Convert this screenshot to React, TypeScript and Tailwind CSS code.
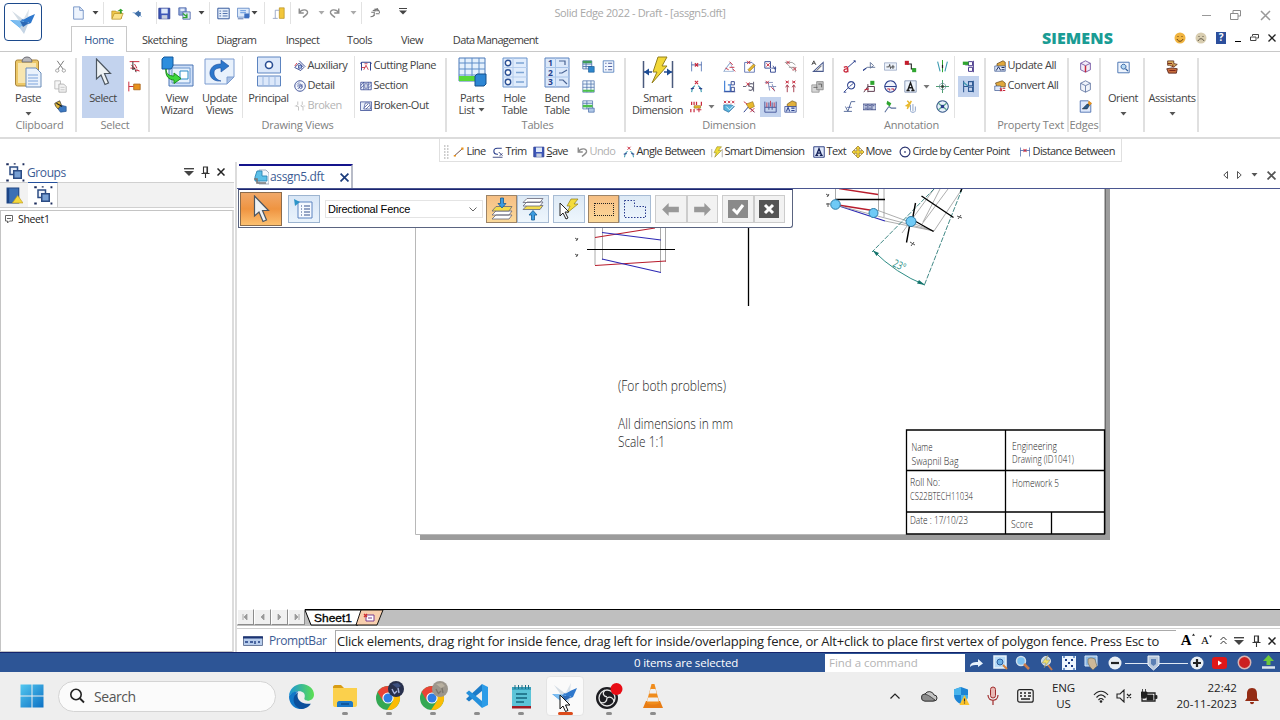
import React from "react";

type Shape = [string, string, string?, number?];

const N = "#2b3f8c";
const R = "#c8283c";
const K = "#1c1c1c";
const B = "#4a86d8";
const Y = "#e8b82c";
const G = "#2fa52f";
const O = "#e8921c";
const X = "#9a9a9a";
const T = "#3a9ab0";

/* 16x16 glyphs: [path, fill, stroke, stroke width] */
const glyphs: Record<string, Shape[]> = {
  file: [["M3 1h7l4 4v10H3z", "#eef4fd", "#6f8fc4"], ["M10 1v4h4", "none", "#6f8fc4"]],
  open: [["M1 5h5l1 1h6v8H1z", "#f0c84a", "#b08a1c", 0.8], ["M1 15l3-7h11l-3 7z", "#fbe28a", "#b08a1c", 0.8], ["M8 5l4-3 3 3-2 0v3h-2v-3", G, "none"]],
  back: [["M4 8l6-4v2h2v5h-2v2z", "#3f6fa8", "none"], ["M2 7h3M11 10l2 2", "none", "#8ab0dc", 1.2]],
  save: [["M1 1.5h13.5v13H1z", "#3c56b8", "#26378c"], ["M4 2h8v6H4z", "#dde8fa", "none"], ["M4.500 10h7v4.500h-7z", "#c6cede", "none"]],
  saveAll: [["M1 1h9v9H1z", "#8ea6d8", "#4a62a8"], ["M6 6h9v9H6z", "#dce6f8", "#4a62a8"], ["M6 8l5 4M11 8v5H6", "none", G, 1.500], ["M3 2h5v3H3z", "#e4ecfa", "none"]],
  form: [["M1 1.500h14v13H1z", "#e4eefb", "#34599c", 1.2], ["M3 5h2M3 8h2M3 11h2M7 5h6M7 8h6M7 11h6", "none", "#34599c"]],
  sheetSave: [["M0.500 1.500h14.500v11H.5z", "#dce9fa", "#5a82c4"], ["M4 4.500h7M4 7h7", "none", B], ["M9 8h6v6H9z", "#3c6fc0", "none"], ["M1 14.500h7", "none", "#34599c"]],
  mat: [["M9 1h6v13H9z", "#f2c63a", "#b08a1c", 0.8], ["M1 14h6M4 14V4h5", "none", "#8c9cbc"]],
  undo: [["M3 2v6h6M3 8c3-6 12-5 11 0-1 3-4 4-6 6", "none", "#8c8c8c", 1.900]],
  redo: [["M13 2v6H7M13 8C10 2 1 3 2 8c1 3 4 4 6 6", "none", "#8c8c8c", 1.900]],
  touch: [["M2 13c4 0 5-2 5-4M3 7l4 0v5M9 3c4 0 5 2 5 5M8 6l0-4M8 5h5M5 5l7-3M9 9l5 0", "none", "#777", 1.400]],
  cut: [["M4 1l7 10M12 1L5 11", "none", "#777", 1.200], ["M4 11a2 2 0 1 0 .1 0M12 11a2 2 0 1 0 .1 0", "none", "#888"]],
  copy: [["M1 1h7v10H1z", "#f6f6f6", "#b4b4b4"], ["M6 5h6l3 3v7H6z", "#f2f2f2", "#aaa"], ["M8 9h5M8 12h5", "none", "#c0c0c0"]],
  brush: [["M7 6l8 2v6l-7 1-3-4z", "#3c78c0", "#24508c", 0.8], ["M1 4l6-3 2 5-4 5C3 9 1 7 1 4z", "#e0b83c", "#333", 0.900], ["M3 4l7 4", "none", K, 1.300]],
  lasso: [["M2 2h12M4 6l4 4M8 5l3 5M3 10h6", "none", R, 1.200], ["M6 2v10l2-2 2 5", "none", K, 1.100], ["M9 13h5M10 11l4 3", "none", R]],
  pinbox: [["M1 2v12M1 8h6", "none", R, 1.200], ["M7 5h8v7H7z", O, "#a8641c"]],
  aux: [["M1 10l6-6 6 6-4 4zM7 1l8 8", "none", N, 1.200], ["M6 7h4v4H6z", "#a8c4ee", N], ["M1 8l3-4", "none", R, 1.200]],
  detail: [["M8 1a7 7 0 1 0 .1 0", "#f4f7fd", N, 1.200], ["M5 9c0-4 5-5 6-1s-4 5-4 1 4-2 3 1M4 6l3-3M5 12l6-6", "none", N, 0.900]],
  broken: [["M5 2v4l-2 2 3 1v5M11 2v4l-2 2 3 1v5", "none", "#b8b8b8", 1.100], ["M1 8h3M12 8h3", "none", "#c4c4c4"]],
  cutplane: [["M2 14V3h12v11M2 3L0 5M14 3l2 2", "none", N, 1.300], ["M5 13l3-6 3 6M2 10h5M6 5h4", "none", R, 1.100]],
  section: [["M1 3h14v10H1z", "#e8eefb", N, 1], ["M5 3v10M11 3v10", "none", N, 0.9], ["M6.500 5h3v6h-3z", "#fff", N, 0.8], ["M1 7l4-4M1 11l4-4M11 7l4-4M11 11l4-4", "none", N, 0.8]],
  brokenout: [["M.500 2.500h15v11.500H.5z", "#e8eefb", N, 1], ["M5 12l2-8 6 0 1 8z", "#fff", N, 0.9], ["M6 10l5-5M8 12l5-5", "none", N, 0.9]],
  tblA: [["M1 1h11v10H1z", "#e8f2fd", "#4a6fa8"], ["M1 5h11M1 8h11M5 1v10", "none", "#4a6fa8"], ["M1 1h11v3H1z", "#3f9c5c", "none"], ["M8 8h7v7H8z", "#2d86cc", "#1c5a94", 0.8]],
  tblB: [["M1 1h14v14H1z", "#eef6fd", "#4a6fa8", 0.9], ["M1 5h14M1 9h14M6 1v14M11 1v14", "none", "#4a6fa8", 0.900], ["M1 12h14v2.500H1z", "#4cc04c", "none"]],
  tblC: [["M1 1h12v10H1z", "#e8f2fd", "#4a6fa8", 0.9], ["M1 4h12M6 1v10", "none", "#4a6fa8"], ["M1 6h12v3H1z", "#4cc04c", "none"], ["M8 10h7v5H8z", "#b0c8e8", "#3c62a0", 0.8]],
  list: [["M1.500 1h13v14h-13z", "#f2f7fe", "#4a78b8"], ["M4 4h1.500M4 8h1.500M4 12h1.500M7.500 4h5M7.500 8h5M7.500 12h5", "none", N]],
  distBetween: [["M2 2v12M14 2v12", "none", "#5a7ab8", 1.100], ["M2 6h12", "none", N, 0.9], ["M6 4l4 4M10 4L6 8", "none", R, 1.400]],
  angBetween: [["M2 15l1-5 3-3M14 15l-1-5-3-3", "none", T, 1.400], ["M1 11l4-1M15 11l-4-1", "none", N, 1.700], ["M6 1l4 4M10 1L6 5", "none", R, 1.300]],
  coord: [["M2 2v4M5 2v4M8 2v4M1 11v4M5 11v4M14 2v5", "none", R, 1.500], ["M5 7h8v3H5z", Y, "#8c6c1c", 0.7], ["M8 12h6M11 10v5", "none", R, 1.200]],
  symDim: [["M1 14h12L9 3zM1 14L9 3", "none", "#8aa4cc", 0.9], ["M8 2l4 4M8 9l6 0M3 10l4 2M12 11l3 3", "none", R, 1.100]],
  chamf: [["M2 3h9l3 3v9H2V3", "none", "#5a6fb0", 1.1], ["M5 1l4 4M9 1L5 5", "none", R, 1.200], ["M6 12l7-7 2 2-7 7z", Y, "#8c6c1c", 0.700]],
  ordin: [["M1 2v8h7V2zM8 11v4h6V8", "none", N, 1.100], ["M3 4l4 4M7 4L3 8", "none", R, 1.200], ["M11 7l3 5M9 10h6", "none", N]],
  balloonX: [["M1 3h9l4 3M2 3l10 10M6 9h8v6", "none", X, 1.1], ["M3 1l4 4M7 1L3 5M11 9l4 4M15 9l-4 4", "none", R, 1.100]],
  wall: [["M2 1v13M6 6h3v8H2", "none", B, 1.500], ["M10 2h4v4h-4zM10 9h4v5h-4z", "none", N, 1.1], ["M1 14.500h14", "none", N]],
  dimS: [["M0 8h4M13 2v12M7 12c5 3 7-4 2-4s-2-5 4-3", "none", "#6a6a7c", 1.300], ["M4 3l4 4M8 3L4 7", "none", R, 1.100]],
  dimT: [["M1 3h10M5 3l2 10M6 8h9M10 5l3 9", "none", "#8894bc", 1.200], ["M2 1l4 4M6 1L2 5M9 9l4 4", "none", R, 1.100]],
  arrows2: [["M4 6v9M12 6v9M2 9l2-3 2 3M10 9l2-3 2 3", "none", "#a84050", 1.200], ["M2 1l4 3M6 1L2 4M10 1l4 3M14 1l-4 3", "none", R, 1.200]],
  checkX: [["M1 1l3 3M4 1L1 4M6 1l3 3M9 1L6 4M11 1l3 3M14 1l-3 3", "none", R, 1.100], ["M1 6h9l4 2-7 7-6-3z", "#5ab4dc", "#2c6ca0", 0.9], ["M4 8l4 4 7-7", "none", "#dff2fc", 1.200]],
  dimY: [["M1 15l6-7M7 9l7 6", "none", N, 1.200], ["M4 5l8-3 2 6-6 3z", Y, "#94701c", 0.8], ["M9 10l5 5M14 10l-5 5M1 2l4 3", "none", R, 1.100]],
  dimGrid: [["M1 2v13h14V2M1 9h14M6 3v9M10 3v9", "none", "#4a5a9c", 1.200], ["M3.500 3v6M8 1v7M12.500 3v6", "none", R, 1]],
  propA: [["M4 5l6-4 5 2v5H4z", "#e0b03c", "#6a501c", 0.8], ["M1 8h14v7H1z", "#dce8fb", N, 0.9], ["M3 14l2-5 2 5M9 10h4M9 13h4", "none", N, 1.300]],
  atri: [["M3 14h12V3z", "none", "#4a5a8c", 1.300], ["M1 6l2.500-5L6 6M2 4h3M7 13l6-6", "none", "#333", 1]],
  grayBox: [["M1 6h9v9H1z", "#d8d8d8", "#888", 0.9], ["M7 2h8v10H7z", "#c4c4c4", "#7c7c7c", 0.9], ["M3 9h5M9 5h4v4", "none", "#555"]],
  leader: [["M6 9l9-8M13 1h2v2", "none", N, 1.200], ["M1 9c5-2 5 0 5 6M6 11c-6-1-6 4-2 4l2-2", "none", R, 1.600]],
  callout: [["M10 2a4.500 4.500 0 1 0 .1 0", "none", N, 1.300], ["M6 10l-5 5M8 8l5-4M1 15h3", "none", N, 1.100]],
  surf: [["M3 8l3 6 4-12h5M1 14h10", "none", "#5a6f9c", 1.200], ["M5 9h6", "none", N, 0.800]],
  weld: [["M0 13l5-4 10 0M9 3v7M9 3l4 4-4 3", "none", "#6a7a9c", 1.200], ["M0 13l4-3", "none", N, 1.400]],
  edgeC: [["M1 15l5-7M6 5v10M6 8h8v6H6", "none", "#5a3a4c", 1.200], ["M9 1h5v5H9z", G, "none"], ["M2 12l5-1", "none", R, 1.500]],
  frame: [["M0 5h16v7H0z", "#c8d0e8", "#34407c", 1], ["M2 7h3M7 7h3M12 7h2M2 10h3M7 10h3M6 5v7M11 5v7", "none", "#34407c", 1]],
  frameF: [["M.500 3.500h15v9H.5z", "#eef3fb", "#8c9cbc", 0.9], ["M3 8.500h3l1-3 1 5 1-2h4M11 6v5", "none", "#333", 1]],
  datum: [["M8 1a7 7 0 1 0 .1 0", "#eef2fb", N, 1.300], ["M1 8h14", "none", N, 1.2], ["M4 11h3v2M9 11h3v2", "none", R, 1.200]],
  node: [["M6 8l3 2h6M6 8l-5 7", "none", "#5a6f9c", 1.300], ["M4 1l5 3-2 4-4-3z", G, "none"]],
  conn: [["M4 5h5v6h5", "none", K, 1.300], ["M1 1h5v5H1z", "#c41c2c", "none"], ["M10 10h5v5h-5z", G, "none"]],
  textA: [["M1 1h14v14H1z", "#edf3fc", "#7a8cac"], ["M3 13h4M9 13h4M4.500 13L8 3.500l3.500 9.500M6 9.500h4", "none", K, 1.700]],
  textF: [["M1 1h14v14H1z", "#dfe8fa", "#26367c", 1.200], ["M3 12.500h4M9 12.500h4M4.500 12.500L8 3.500l3.500 9M6 9.500h4", "none", "#101c54", 1.800]],
  lightY: [["M4 1l3 3-4 3 4 1M9 1L4 11", "none", Y, 1.800], ["M8 6v7c0 3 6 3 6 0V8M11 5v9", "none", "#8ca4c8", 1.200]],
  centerL: [["M2 2l3 12M14 2l-3 12", "none", T, 1.300], ["M8 0v15", "none", G, 1.300], ["M8 6v4", "none", K, 1.500]],
  centerM: [["M8 0v16M0 8h16", "none", "#4a9c6c", 1.200], ["M8 4a4 4 0 1 0 .1 0", "none", "#6a8a9c", 0.900], ["M6.500 6.500h3v3h-3z", "#333", "none"]],
  bolt: [["M8 1a7 7 0 1 0 .1 0", "#e8f2fb", "#3c5c8c", 1.300], ["M3 4l10 8M13 4L3 12", "none", "#5aa88c", 1.600], ["M6 6h4v4H6z", N, "none"]],
  relG: [["M8 2h5v5H8zM8 9h5v5H8zM14 1v14M4 6h4", "none", "#4a3a8c", 1.200], ["M1 2h7v4H1z", G, "none"]],
  relB: [["M2 1v14M8 2h5v5H8zM8 9h5v5H8zM14 1v14M2 8h6", "none", "#2f5a94", 1.300], ["M2 3l5 4", "none", T, 1.400]],
  updProp: [["M4 5l8-4 3 2v6H4z", "#e0a83c", "#5a401c", 0.9], ["M1 8h14v7H1z", "#dfe9fb", "#34508c", 0.9], ["M3 14l3-5 3 5M10 10h4M10 13h4", "none", "#1c2c5c", 1.300]],
  convProp: [["M2 4l9-3 4 3v5H4z", "#e0a83c", "#5a401c", 0.9], ["M1 8h8v6H1z", "#dfe9fb", "#34508c", 0.9], ["M8 11l3 4M11 11l-3 4M12 11h3M12 14h3", "none", R, 1.400]],
  cubeR: [["M8 1l6 3v8l-6 3-6-3V4z", "#f2ecf8", "#6a4a9c", 1], ["M2 4l6 3 6-3", "none", "#6a4a9c"], ["M8 7v8", "none", R, 1.800]],
  cube: [["M8 1l6 3v8l-6 3-6-3V4z", "#f0f3fa", "#5a6f9c", 1], ["M2 4l6 3 6-3M8 7v8", "none", "#5a6f9c"]],
  edgePaint: [["M1.500 1h10l3 3v11h-13z", "#dfe9fb", "#3c62a8", 1], ["M4 11l6-6 4 0-4 6z", "#2c5c8c", "#1c1c1c", 0.6], ["M12 1l4 3-3 3-2-3z", O, "none"]],
  orient: [["M1 1.500h14v13H1z", "#eef4fd", "#4f78b4", 1.200], ["M8 4a3 3 0 1 0 .1 0", "#b8daf4", "#2c5c9c", 1.200], ["M10.500 9.500l3 3", "none", "#2c5c9c", 1.500]],
  assist: [["M3 1h7v3l4 1-4 3-5-2H3z", "#d8ac5c", "#5c2c1c", 0.9], ["M2 10l6-1 6 1-1 5H4z", "#c86c3c", "#4c1c14", 0.9], ["M3 4h5M5 12h7M9 5v3", "none", "#7c2418", 1.100]],
  line: [["M2 13L12 4", "none", "#5a3a3a", 1.200], ["M11 2h3v3h-3zM1 12h3v2H1z", O, "none"]],
  trim: [["M13 3H7c-6 0-6 8 0 8h1", "none", N, 1.500], ["M9 8l5 5M14 10l-4 3M1 15h13", "none", "#34407c", 1.200]],
  smart: [["M1 4v11M15 4v11", "none", X], ["M8 1h6l-4 5h4l-9 9 2-6H4z", "#eedc38", "#8a7a1c", 0.7]],
  move: [["M8 0l3.500 3.500H9.500v3h3V4.500L16 8l-3.500 3.500V9.500h-3v3h2L8 16l-3.500-3.500h2v-3h-3v2L0 8l3.500-3.500v2h3v-3h-2z", "#f2d43a", "#8c6c1c", 0.9]],
  circle: [["M8 1.500a6.500 6.500 0 1 0 .1 0", "none", "#2b3470", 1.500], ["M7 7h2v2H7z", "#2b3470", "none"]],
  group: [["M4 4h6v6H4z", "#eef3fb", "#2c4c84", 1.200], ["M7 7h6v6H7z", "#78a0d4", "#2c4c84", 1.200], ["M1 1h2v1.500H1zM7 1h1.500v1H7zM14 1h1.500v1.500H14zM1 14h2v1.500H1zM14 14h1.500v1.500H14z", "#1c2c5c", "none"]],
  lib: [["M1 1h11v14H1z", "#3c70b4", "#1c4484"], ["M1 1h2v14H1z", "#1c4484", "none"], ["M11 8l5 7H6z", "#f4d83c", "#c09c1c", 0.6]],
  doc: [["M6 1h7l3 3v11H6z", "#f4f7fc", "#9ca8bc", 0.900], ["M4 2h5v5h5v5H2V8z", "#5cc0e8", "#2c86b4", 0.9], ["M1 10h3v4h9", "none", "#777", 1.600]],
};

function Ico({ n, s = 16, c = "" }: { n: string; s?: number; c?: string }) {
  return (
    <svg width={s} height={s} viewBox="0 0 16 16" className={"shrink-0 " + c}>
      {(glyphs[n] || []).map(([d, f, st, w], i) => (
        <path key={i} d={d} fill={f} stroke={st ?? "none"} strokeWidth={w ?? 1} />
      ))}
    </svg>
  );
}

function Caret({ c = "text-[#555]" }: { c?: string }) {
  return (
    <svg width="7" height="4" viewBox="0 0 7 4" className={"shrink-0 " + c}>
      <path d="M.5 0h6L3.500 3.500z" fill="currentColor" />
    </svg>
  );
}

function Col({ icons, w = "w-[20.5px]", active }: { icons: string[]; w?: string; active?: number }) {
  return (
    <div className={"flex shrink-0 flex-col pt-[2px] " + w}>
      {icons.map((n, i) => (
        <div key={i} className={"flex h-[20.3px] items-center justify-center " + (active === i ? "bg-[#c3d3ee]" : "")}>
          {n && <Ico n={n} s={13} />}
        </div>
      ))}
    </div>
  );
}

function Big({ w, children, a, b, caret, c = "" }: { w: string; children: React.ReactNode; a: string; b?: string; caret?: "inline" | "below"; c?: string }) {
  return (
    <div className={"flex shrink-0 flex-col items-center " + w + " " + c}>
      <div className="flex h-9 items-center justify-center">{children}</div>
      <div className="whitespace-nowrap text-center leading-[12px] pt-0.5">
        {a}
        {b && (
          <div className="flex items-center justify-center gap-1">
            {b}
            {caret === "inline" && <Caret />}
          </div>
        )}
      </div>
      {caret === "below" && <div className="mt-2"><Caret /></div>}
    </div>
  );
}

function Group({ w, label, children }: { w: string; label: string; children: React.ReactNode }) {
  return (
    <div className={"flex h-[74px] mt-1.5 shrink-0 flex-col border-r-2 border-[#e0e0e0] " + w}>
      <div className="-mt-1.5 flex h-[66px] shrink-0 pt-0.5">{children}</div>
      <div className="whitespace-nowrap text-center leading-[14px] tracking-[-0.2px] text-[#808080]">{label}</div>
    </div>
  );
}

function Rows({ items, w }: { items: [string, string, boolean?][]; w: string }) {
  return (
    <div className={"flex shrink-0 flex-col pt-[1.5px] " + w}>
      {items.map(([n, t, off]) => (
        <div key={t} className={"flex h-5 items-center gap-[1.5px] whitespace-nowrap " + (off ? "text-[#b4b4b4]" : "")}>
          <Ico n={n} s={12} />
          {t}
        </div>
      ))}
    </div>
  );
}

const VSep = () => <div className="mt-[2px] h-[62px] w-px shrink-0 bg-[#e2e2e2]" />;

function Bird({ s }: { s: number }) {
  return (
    <svg width={s} height={s} viewBox="0 0 26 26" className="shrink-0">
      <path d="M2 2l12 9-2 5z" fill="#d3dce4" />
      <path d="M25 5L11 11l3 6 7-3z" fill="#2f78cc" />
      <path d="M0 11l14 1 1 11z" fill="#4aa4ee" />
      <path d="M9 18l10-5-5 12z" fill="#c4d4e4" />
      <path d="M1 11l13 1-4 7z" fill="#7cbcf0" />
      <path d="M10 12l9 2-6 4z" fill="#2c68b4" />
      <path d="M19 0l-6 11 5-3z" fill="#dbe3ea" />
    </svg>
  );
}

function Arrow({ w, h }: { w: number; h: number }) {
  return (
    <svg width={w} height={h} viewBox="0 0 16 28" className="shrink-0">
      <path d="M1 1v20l4.500-4 4 9.500 3.500-1.500-4-9.500H15z" fill="#eef2f4" stroke="#4c5660" strokeWidth="1.200" />
    </svg>
  );
}

function Header() {
  const S = ({ c = "" }: { c?: string }) => <div className={"h-[22px] w-px shrink-0 bg-[#e2e2e2] " + c} />;
  return (
    <header className="flex h-[52px] shrink-0">
      <div className="flex w-[71px] shrink-0 items-start border-b border-[#c8c8c8] pl-1 pt-[3px]">
        <div className="flex h-[38px] w-[38px] items-center justify-center rounded-[4px] border border-[#1c4a8c] bg-white">
          <Bird s={26} />
        </div>
      </div>
      <div className="flex grow flex-col">
        <div className="flex h-[26px] shrink-0 items-center">
          <div className="flex w-[345px] shrink-0 items-center">
            <Ico n="file" s={14} />
            <Caret c="text-[#444] ml-[7px]" />
            <S c="ml-1" />
            <Ico n="open" s={13} c="ml-[7px]" />
            <Ico n="back" s={13} c="ml-[7px]" />
            <S c="ml-3" />
            <Ico n="save" s={13} c="ml-px" />
            <Ico n="saveAll" s={13} c="ml-[7px]" />
            <Caret c="text-[#444] ml-[7px]" />
            <S c="ml-1" />
            <Ico n="form" s={13} c="ml-[7px]" />
            <Ico n="sheetSave" s={13} c="ml-[7px]" />
            <Caret c="text-[#444] ml-px" />
            <S c="ml-1.5" />
            <Ico n="mat" s={13} c="ml-[7px]" />
            <S c="ml-[5px]" />
            <Ico n="undo" s={12} c="ml-1.5" />
            <Caret c="text-[#aaa] ml-[9px]" />
            <Ico n="redo" s={12} c="ml-1" />
            <Caret c="text-[#aaa] ml-[9px]" />
            <S c="ml-1" />
            <Ico n="touch" s={12} c="ml-[7px]" />
            <svg width="8" height="7" viewBox="0 0 8 7" className="ml-[18px] -mt-1 shrink-0"><path d="M0 .500h8" stroke="#444" /><path d="M0 2.500h8L4 6.500z" fill="#444" /></svg>
          </div>
          <div className="w-[448px] shrink-0 pt-px text-center text-[11px] tracking-[-0.38px] text-[#a8a8a8]">Solid Edge 2022 - Draft - [assgn5.dft]</div>
          <div className="ml-auto flex items-center gap-[19px] pr-[9px] pt-1">
            <div className="h-px w-[9px] bg-[#999]" />
            <svg width="11" height="11" viewBox="0 0 11 11"><path d="M3 3V.500h7.500V6H8M.500 3.500H8v6H.500z" fill="none" stroke="#8c8c8c" /></svg>
            <svg width="11" height="11" viewBox="0 0 11 11"><path d="M1 1l9 9M10 1l-9 9" stroke="#999" strokeWidth="1.500" /></svg>
          </div>
        </div>
        <div className="flex h-[26px] items-stretch text-[11px]">
          <div className="flex w-[56px] shrink-0 items-center justify-center border border-b-0 border-[#c8c8c8] pt-0.5 tracking-[-0.4px] text-[#2c5590]">Home</div>
          <nav className="flex grow items-center border-b border-[#c8c8c8] pt-[3px] tracking-[-0.5px] text-[#3c3c3c]">
            <div className="w-[75px] text-center">Sketching</div>
            <div className="w-[69px] text-center">Diagram</div>
            <div className="w-[63px] text-center">Inspect</div>
            <div className="w-[51px] text-center">Tools</div>
            <div className="w-[54px] text-center">View</div>
            <div className="w-[113px] text-center tracking-[-0.65px]">Data Management</div>
            <div className="-mt-[5px] ml-auto mr-[61px] text-[16px] font-extrabold leading-none tracking-[0.1px] text-[#1a9c94]">SIEMENS</div>
            <div className="-mt-[5px] flex items-center gap-[9px] pr-1">
              <svg width="12" height="12" viewBox="0 0 12 12"><circle cx="6" cy="6" r="5.500" fill="#f0b440" /><path d="M4 4v1M8 4v1M3 7c1 3 5 3 6 0" stroke="#6c4410" fill="none" /></svg>
              <svg width="12" height="12" viewBox="0 0 12 12"><circle cx="6" cy="6" r="5.500" fill="#d8cdb0" /><path d="M4 4v1M8 4v1M3 9c1-3 5-3 6 0" stroke="#5c5444" fill="none" /></svg>
              <div className="flex h-[12px] w-[10px] items-center justify-center bg-[#2c4f9c] text-[10px] font-bold text-white">?</div>
              <div className="mt-2 h-[1.500px] w-[6px] bg-black" />
              <svg width="9" height="8" viewBox="0 0 9 8"><path d="M2.500 2V.500h6V4H7M.500 3H6v3.500H.500z" fill="none" stroke="#444" /></svg>
              <svg width="8" height="8" viewBox="0 0 8 8"><path d="M.500.500l7 7M7.500.500l-7 7" stroke="#222" strokeWidth="1.300" /></svg>
            </div>
          </nav>
        </div>
      </div>
    </header>
  );
}

function Ribbon() {
  return (
    <div className="flex h-[87px] shrink-0 border-b-2 border-[#dcdcdc] text-[11px] tracking-[-0.45px] text-[#444]">
      <Group w="w-[77px] pl-[4px]" label="Clipboard">
        <Big w="w-[48px]" a="Paste" caret="below">
          <svg width="28" height="32" viewBox="0 0 28 32">
            <rect x="1.500" y="4" width="23" height="26" rx="2" fill="#ecc868" stroke="#a8843c" />
            <rect x="4" y="7" width="18" height="20" fill="#f8e6b0" />
            <path d="M8 6c0-3 2-5 5-5s5 2 5 5z" fill="#b8b8bc" stroke="#707078" />
            <path d="M12 12h10l5 5v14H12z" fill="#eaf2fc" stroke="#6a8cb8" />
            <path d="M14 19h10M14 22h10M14 25h10M14 28h10" stroke="#7ca4dc" />
          </svg>
        </Big>
        <Col icons={["cut", "copy", "brush"]} w="w-[16px]" />
      </Group>
      <Group w="w-[73px] pl-[5px]" label="Select">
        <div className="mt-0.5 h-[62px] w-[42px] shrink-0 bg-[#c3d3ee]">
          <Big w="w-[42px]" a="Select" c="-mt-0.5"><Arrow w={17} h={28} /></Big>
        </div>
        <Col icons={["lasso", "pinbox"]} />
      </Group>
      <Group w="w-[297px]" label="Drawing Views">
        <Big w="w-[54px]" a="View" b="Wizard">
          <svg width="33" height="32" viewBox="0 0 33 32">
            <path d="M8 9h24v21H8z" fill="#cfe0f8" stroke="#4a74b4" />
            <path d="M11 12h18v15H11z" fill="#e8f2fd" stroke="#6a94cc" />
            <path d="M19 15h8v8h-8z" fill="#fff" stroke="#2c8cc8" />
            <path d="M1 3l2-2h9v9l-2 3H1z" fill="#2d8ede" stroke="#14589c" />
            <path d="M5 13c0 5 3 7 8 7v-3l7 5.500-7 5V24C8 24 4 20 5 13z" fill="#3cd83c" stroke="#1c8c1c" />
          </svg>
        </Big>
        <Big w="w-[31px]" a="Update" b="Views">
          <svg width="31" height="30" viewBox="0 0 31 30">
            <path d="M1 2h29v18l-7 7H1z" fill="#e8f1fc" stroke="#7c9cd0" />
            <path d="M23 27v-7h7z" fill="#a8c0e4" stroke="#7c9cd0" />
            <path d="M17 24C7 25 4 17 7 12c2-4 6-5 10-5V3l8 6-8 6v-4c-4 0-7 1-7 5 0 4 3 7 7 8z" fill="#2c78cc" stroke="#1c4c9c" strokeWidth=".6" />
          </svg>
        </Big>
        <div className="w-[7px] shrink-0" />
        <VSep />
        <Big w="w-[51px]" a="Principal">
          <svg width="26" height="32" viewBox="0 0 26 32">
            <path d="M1.500 1h23v16h-23z" fill="#dce8fa" stroke="#5c84c0" />
            <circle cx="13" cy="9" r="3.500" fill="#fff" stroke="#2b4f94" strokeWidth="1.600" />
            <path d="M1.500 20h23v10h-23z" fill="#dce8fa" stroke="#5c84c0" />
            <path d="M7 20v10M13 20v10M19 20v10" stroke="#9cb8e0" />
          </svg>
        </Big>
        <Rows w="w-[59px] -mr-px" items={[["aux", "Auxiliary"], ["detail", "Detail"], ["broken", "Broken", true]]} />
        <div className="w-[2px] shrink-0" />
        <VSep />
        <div className="w-[5px] shrink-0" />
        <Rows w="w-[84px]" items={[["cutplane", "Cutting Plane"], ["section", "Section"], ["brokenout", "Broken-Out"]]} />
      </Group>
      <Group w="w-[179px] pl-[4px]" label="Tables">
        <Big w="w-[42px]" a="Parts" b="List" caret="inline">
          <svg width="29" height="30" viewBox="0 0 29 30">
            <path d="M1 1h26v23H1z" fill="#e4f0fc" stroke="#4a78b8" />
            <path d="M1 6h26M1 12h26M1 18h26M7 1v23M14 1v23M21 1v23" stroke="#5c8cc8" />
            <path d="M1 19h20v5H1z" fill="#58d838" />
            <path d="M17 19l2-2h9v10l-2 2h-9z" fill="#2d86d4" stroke="#14508c" />
          </svg>
        </Big>
        <Big w="w-[43px]" a="Hole" b="Table">
          <svg width="26" height="31" viewBox="0 0 26 31">
            <path d="M1 1h24v29H1z" fill="#e0ecfc" stroke="#6a94cc" />
            <path d="M11 1v29M1 10.500h24M1 20h24" stroke="#b4ccec" />
            {[6, 15.5, 25].map((y) => (<g key={y}><circle cx="6" cy={y} r="2.700" fill="#fff" stroke="#2b4f94" strokeWidth="1.400" /><path d={`M14 ${y}h8`} stroke="#7ca4d4" strokeWidth="1.500" /></g>))}
          </svg>
        </Big>
        <Big w="w-[42px]" a="Bend" b="Table">
          <svg width="26" height="31" viewBox="0 0 26 31">
            <path d="M1 1h24v29H1z" fill="#dbe8fa" stroke="#5c84c0" />
            <path d="M11.500 1v29M1 10.500h24M1 20h24" stroke="#a8c4e8" />
            <path d="M15 4h6v4M15 16h3l5-3M15 23h4l4 4" stroke="#4a6494" fill="none" strokeWidth="1.200" />
            <g fill="#26408c" fontSize="8.500" fontWeight="700" fontFamily="Open Sans, sans-serif"><text x="4" y="9">1</text><text x="4" y="18.500">2</text><text x="4" y="28">3</text></g>
          </svg>
        </Big>
        <Col icons={["tblA", "tblB", "tblC"]} />
        <Col icons={["list"]} />
      </Group>
      <Group w="w-[208px]" label="Dimension">
        <Big w="w-[62px]" a="Smart" b="Dimension" c="pl-px">
          <svg width="32" height="33" viewBox="0 0 32 33">
            <path d="M1.500 5v27M30.500 5v27" stroke="#4a5a7c" strokeWidth="1.500" />
            <path d="M2 16h8M22 16h8" stroke="#2b4f94" strokeWidth="1.500" /><path d="M2 16l5-3.500v7zM30 16l-5-3.500v7z" fill="#1c4c94" />
            <path d="M16 1h9l-5 9h5L10 27l5-11h-4z" fill="#f2d838" stroke="#94801c" />
          </svg>
        </Big>
        <Col icons={["distBetween", "angBetween", "coord"]} w="w-[16px]" />
        <div className="w-[15px] shrink-0 pl-1 pt-[51px]"><Caret c="text-[#777]" /></div>
        <Col icons={["symDim", "wall", "checkX"]} />
        <Col icons={["chamf", "dimS", "dimY"]} />
        <Col icons={["ordin", "dimT", "dimGrid"]} active={2} />
        <Col icons={["balloonX", "arrows2", "propA"]} />
        <div className="w-[2px] shrink-0" />
        <VSep />
        <div className="w-[3px] shrink-0" />
        <Col icons={["atri", "grayBox"]} />
      </Group>
      <Group w="w-[152px] pl-[5px]" label="Annotation">
        <Col icons={["leader", "callout", "surf"]} />
        <Col icons={["weld", "edgeC", "frame"]} />
        <Col icons={["frameF", "datum", "node"]} />
        <Col icons={["conn", "textA", "lightY"]} w="w-[19.5px]" />
        <div className="w-[13px] shrink-0 pl-[3px] pt-[31px]"><Caret c="text-[#777]" /></div>
        <Col icons={["centerL", "centerM", "bolt"]} w="w-[19px]" />
        <div className="w-[2px] shrink-0" />
        <VSep />
        <div className="w-[3px] shrink-0" />
        <Col icons={["relG", "relB"]} active={1} />
      </Group>
      <Group w="w-[83px] pl-[8px]" label="Property Text">
        <Rows w="w-[70px]" items={[["updProp", "Update All"], ["convProp", "Convert All"]]} />
      </Group>
      <Group w="w-[32px]" label="Edges">
        <Col icons={["cubeR", "cube", "edgePaint"]} w="w-[32px]" />
      </Group>
      <Group w="w-[44px]" label="">
        <Big w="w-[44px]" a="Orient" caret="below"><Ico n="orient" s={13} c="-mt-2.5" /></Big>
      </Group>
      <Group w="w-[54px]" label="">
        <Big w="w-[54px]" a="Assistants" caret="below"><Ico n="assist" s={14} c="-mt-2.5" /></Big>
      </Group>
    </div>
  );
}

const quick: [string, React.ReactNode, string, boolean?][] = [
  ["line", "Line", "w-[39px]"],
  ["trim", "Trim", "w-[41px]"],
  ["save", <><u>S</u>ave</>, "w-[43px]"],
  ["undo", "Undo", "w-[47px]", true],
  ["angBetween", "Angle Between", "w-[88px]"],
  ["smart", "Smart Dimension", "w-[102px]"],
  ["textF", "Text", "w-[39px]"],
  ["move", "Move", "w-[47px]"],
  ["circle", "Circle by Center Point", "w-[120px]"],
  ["distBetween", "Distance Between", "w-[98px]"],
];

function QuickBar() {
  return (
    <div className="flex h-[23px] shrink-0 pl-[439px]">
      <div className="flex w-[683px] items-center border border-t-0 border-[#e0e0e0] pl-1 pt-[3px] text-[11px] tracking-[-0.6px] text-[#333]">
        <svg width="6" height="14" viewBox="0 0 6 14" className="mr-[3px] shrink-0">
          {[1, 4, 7, 10, 13].map((y) => (<path key={y} d={`M0 ${y}h1.500M3 ${y}h1.500`} stroke="#999" />))}
        </svg>
        {quick.map(([n, t, w, off]) => (
          <div key={n} className={"flex shrink-0 items-center gap-[1.5px] whitespace-nowrap " + w + (off ? " text-[#b0b0b0]" : "")}>
            <Ico n={n} s={12} />
            <span>{t}</span>
          </div>
        ))}
      </div>
    </div>
  );
}

function Pin() {
  return (
    <svg width="9" height="12" viewBox="0 0 9 12" className="shrink-0">
      <path d="M2.500 1h4v6h-4zM.500 7.500h8M4.500 8v4M6 1v6" stroke="#333" fill="none" strokeWidth="1.100" />
    </svg>
  );
}

function Cross({ s = 8, c = "text-[#222]" }: { s?: number; c?: string }) {
  return (
    <svg width={s} height={s} viewBox="0 0 8 8" className={"shrink-0 " + c}>
      <path d="M.500.500l7 7M7.500.500l-7 7" stroke="currentColor" strokeWidth="1.500" />
    </svg>
  );
}

function Menu() {
  return (
    <svg width="10" height="8" viewBox="0 0 10 8" className="shrink-0">
      <path d="M0 .700h10" stroke="#444" strokeWidth="1.400" /><path d="M0 3h10L5 8z" fill="#444" />
    </svg>
  );
}

function LeftPanel() {
  return (
    <aside className="flex w-[235px] shrink-0 flex-col">
      <div className="flex h-5 items-center pl-[5px]">
        <Ico n="group" s={20} />
        <span className="ml-[2px] pt-px text-[12px] tracking-[-0.4px] text-[#3c5c94]">Groups</span>
        <div className="ml-auto flex items-center gap-[7px] pr-[10px]"><Menu /><Pin /><Cross /></div>
      </div>
      <div className="flex h-[26px] w-[234px] items-stretch border-y border-[#d0d0d0] bg-[#f2f2f2]">
        <div className="flex w-[28px] items-center justify-center"><Ico n="lib" s={17} /></div>
        <div className="-mt-px flex w-[30px] items-center justify-center border-r border-t border-r-[#ccc] border-t-[#24509c] bg-white"><Ico n="group" s={20} /></div>
      </div>
      <div className="mt-[2px] w-[234px] grow border border-r-2 border-[#c4c4c4] border-r-[#dcdcdc] pl-1 pt-[3px]">
        <div className="flex items-center gap-[5px] text-[10.5px] leading-none tracking-[-0.35px] text-[#222]">
          <svg width="8" height="9" viewBox="0 0 8 9"><path d="M.500.500h7v5.500h-3l-2 2v-2h-2zM2 3.500h4" fill="none" stroke="#666" /></svg>
          Sheet1
        </div>
      </div>
    </aside>
  );
}

function Tool({ on, w = "w-[31px]", children }: { on?: boolean; w?: string; children: React.ReactNode }) {
  return (
    <div className={"flex h-[28px] shrink-0 items-center justify-center border " + w + (on ? " border-[#9c8468] bg-linear-to-b from-[#f6bf84] to-[#fbd99a]" : " border-[#a8bcd4] bg-linear-to-b from-[#dde9f5] to-[#eef6fd]")}>
      {children}
    </div>
  );
}

function Layers({ up }: { up?: boolean }) {
  return up ? (
    <svg width="24" height="24" viewBox="0 0 24 24">
      <path d="M2 12.500l4-4h16l-3 4z" fill="#f4dc4c" stroke="#667" strokeWidth=".8" />
      <path d="M2 9l4-4h16l-3 4zM2 5.500l4-4h16l-3 4z" fill="#fff" stroke="#667" strokeWidth=".8" />
      <path d="M12 13.500l4 4.500h-2.500v5h-3v-5H8z" fill="#3c9ce0" stroke="#145c94" strokeWidth=".8" />
    </svg>
  ) : (
    <svg width="24" height="24" viewBox="0 0 24 24">
      <path d="M2 22l4-4h16l-3 4zM2 18l4-4h16l-3 4z" fill="#fff" stroke="#667" strokeWidth=".8" />
      <path d="M2 14l4-4.500h16L19 14z" fill="#f4dc4c" stroke="#667" strokeWidth=".8" />
      <path d="M10.500 1h3v5.500H16L12 11 8 6.500h2.500z" fill="#3c9ce0" stroke="#145c94" strokeWidth=".8" />
    </svg>
  );
}

function CommandBar() {
  return (
    <div className="absolute left-px top-0 flex h-[39px] w-[555px] items-center rounded-br-[3px] border border-[#5a6480] border-t-[#1c2470] bg-white pl-px pt-px">
      <div className="flex h-[34px] w-[42px] shrink-0 items-center justify-center border border-[#8c6c4c] bg-linear-to-b from-[#f0a868] via-[#ef9440] to-[#fbc070]"><Arrow w={17} h={28} /></div>
      <div className="ml-[6px] flex h-[28px] w-[32px] shrink-0 items-center justify-center border border-[#9cb4d0] bg-linear-to-b from-[#d8e6f6] to-[#eaf3fc]">
        <svg width="20" height="20" viewBox="0 0 20 20"><path d="M4 3h14v16H4z" fill="#f6faff" stroke="#5c84c0" /><path d="M7 7h1M7 10h1M7 13h1M7 16h1M10 7h6M10 10h6M10 13h6M10 16h6" stroke="#34508c" strokeWidth="1.200" /><path d="M0 0l6 3-5 4z" fill="#2c94c8" /></svg>
      </div>
      <div className="ml-[5px] flex h-[18px] w-[158px] shrink-0 items-center justify-between border border-[#e4e4e4] pl-[2px] pr-[5px] font-['Liberation_Sans'] text-[11px] tracking-[-0.2px] text-black">
        Directional Fence
        <svg width="8" height="5" viewBox="0 0 8 5"><path d="M.500.500L4 4 7.500.500" fill="none" stroke="#666" /></svg>
      </div>
      <div className="w-[3px] shrink-0" />
      <Tool on><Layers /></Tool><Tool w="w-[32px]"><Layers up /></Tool>
      <div className="w-[4px] shrink-0" />
      <Tool w="w-[32px]">
        <svg width="22" height="22" viewBox="0 0 22 22"><path d="M13 1h7l-4 5h4L9 15l3-7h-3z" fill="#f4dc3c" stroke="#8c7c1c" strokeWidth=".7" /><path d="M2 5v13l3-3 3 6 2-1-3-6h4z" fill="#fff" stroke="#222" /></svg>
      </Tool>
      <div className="w-[3px] shrink-0" />
      <Tool on><div className="h-[13px] w-[20px] border border-dotted border-[#222]" /></Tool>
      <Tool w="w-[32px]"><svg width="22" height="18" viewBox="0 0 22 18"><path d="M.500.500h10v6h11v11H.500z" fill="none" stroke="#26388c" strokeDasharray="1.500 1.500" /></svg></Tool>
      <div className="w-[4px] shrink-0" />
      {["M0 7l7-7v4h11v6H7v4z", "M18 7l-7-7v4H0v6h11v4z"].map((d) => (
        <div key={d} className="flex h-[28px] w-[31.500px] shrink-0 items-center justify-center border border-[#ccc] bg-[#f2f2f2]"><svg width="17" height="13" viewBox="0 0 18 14"><path d={d} fill="#999" /></svg></div>
      ))}
      <div className="w-[4px] shrink-0" />
      {["M4 9l4 4 6-8", "M5 5l8 8M13 5l-8 8"].map((d, i) => (
        <div key={d} className="flex h-[28px] w-[31.500px] shrink-0 items-center justify-center border border-[#ccc] bg-[#f2f2f2]">
          <svg width="20" height="18" viewBox="-1 0 20 18"><path d="M-1 0h20v18H-1z" fill={i ? "#555" : "#8a8a8a"} /><path d={d} fill="none" stroke="#fff" strokeWidth="3" /></svg>
        </div>
      ))}
    </div>
  );
}

const notes: [number, number, number, string, number][] = [
  [618, 390.500, 108, "(For both problems)", 14.5],
  [618, 428.500, 115, "All dimensions in mm", 14.5],
  [618, 447, 47, "Scale 1:1", 14.5],
  [911.5, 451, 21, "Name", 10.5],
  [911.5, 464.5, 47, "Swapnil Bag", 10.5],
  [910, 486, 30, "Roll No:", 10.5],
  [910, 499.5, 63, "CS22BTECH11034", 10.5],
  [910, 524, 58, "Date : 17/10/23", 10.5],
  [1012, 449.5, 45, "Engineering", 10.5],
  [1012, 463, 62, "Drawing (ID1041)", 10.5],
  [1012, 487, 47, "Homework 5", 10.5],
  [1011, 527.500, 22, "Score", 10.5],
];

function Sheet() {
  return (
    <svg width="1043" height="420" viewBox="237 189 1043 420" className="block">
      <path d="M1104 189h6v351H420v-6h684z" fill="#9c9c9c" />
      <path d="M415.500 189v345.500H1104.500V189" fill="#fff" stroke="#b8b8b8" />
      <path d="M1105.500 189v345" stroke="#6c6c6c" />
      <path d="M748.500 228v78" stroke="#000" strokeWidth="1.300" />
      <g fill="none">
        <path d="M595 228v37M602.500 228v32M660.500 228v44M665.500 228v34" stroke="#aaa" />
        <path d="M595 237.500l60-9.500M595 265.500l71-4.500" stroke="#b81c2c" strokeWidth="1.200" />
        <path d="M602 232.500l59 7.500M602 259l59 13.500" stroke="#2c28b4" strokeWidth="1.200" />
        <path d="M587 249.500h88" stroke="#000" />
        <path d="M575 238l3 2M578 238l-2 3M575 254l3 2M578 254l-2 3" stroke="#555" />
        <path d="M835.500 189v10M878.500 189v22M884 189v28" stroke="#aaa" />
        <path d="M839 188.500l39 6M838 205l38 6" stroke="#b81c2c" strokeWidth="1.300" />
        <path d="M835.500 199.500H885" stroke="#000" strokeWidth="1.300" />
        <path d="M836 205l49 16" stroke="#2c28b4" strokeWidth="1.300" />
        <path d="M836 205l98 26M874 209l60 22M885 221l49 10M940 189l-17 33M948 189l-26 35M934 189l-32 44M962 189l-28 42" stroke="#999" strokeWidth=".8" />
        <path d="M934 189L872 252M962 189l-38 97" stroke="#2c7c78" strokeWidth=".9" strokeDasharray="5 1.500" />
        <path d="M873 250.500q23 23 52 34.500" stroke="#2c8c84" />
        <path d="M873 250.500l6 2.500-2.500 3zM925 285l-8-1.500 2-3.500z" fill="#14746c" />
        <path d="M921.500 196l32 21.500M915.500 203l-3 16M909.500 226l-3 16.500M914 220.500l19.500 11M962 188l-1.500 4" stroke="#000" strokeWidth="1.400" />
        <path d="M826 194l3 2M829 194l-2 3M826 204h4M828 203v4M957 216l5 2M961 215l-3 4M910 242l5 3M914 242l-3 4" stroke="#555" />
      </g>
      <g fill="#6fcaf6" stroke="#2c7ca8">
        <circle cx="835.500" cy="204.500" r="4.800" /><circle cx="873.500" cy="213" r="4.500" /><circle cx="911" cy="221.500" r="5" />
      </g>
      <text x="892" y="266" transform="rotate(25 892 266)" fontSize="11" textLength="13" lengthAdjust="spacingAndGlyphs" fill="#1c8c84" fontFamily="Open Sans">23°</text>
      <g fill="none" stroke="#000" strokeWidth="1.300">
        <path d="M906.500 430h198v104h-198zM1005.500 430v104M906.500 470.500h198M906.500 512h198M1051.500 512v22" />
      </g>
      <g fontFamily="Open Sans, sans-serif" fontWeight="300" fill="#1c1c24">
        {notes.map(([x, y, w, t, s]) => (
          <text key={t} x={x} y={y} fontSize={s} textLength={w} lengthAdjust="spacingAndGlyphs">{t}</text>
        ))}
      </g>
    </svg>
  );
}

function Main() {
  return (
    <main className="flex grow flex-col border-l-2 border-[#dcdcdc]">
      <div className="flex h-[26px] shrink-0 items-end pl-[2px] pt-[2px]">
        <div className="flex h-[24px] w-[114px] items-center border-r-2 border-t-2 border-[#b8bcc8] border-t-[#14148c] pl-[14px] text-[12px] tracking-[-0.35px] text-[#3c5c94]">
          <Ico n="doc" s={16} />
          <span className="ml-px">assgn5.dft</span>
          <Cross s={9} c="ml-auto mr-[2px] text-[#1c3c7c]" />
        </div>
        <div className="ml-auto flex h-[26px] items-center gap-[9px] pr-[4px]">
          <svg width="5" height="8" viewBox="0 0 5 8"><path d="M4.500.500v7L.800 4z" fill="none" stroke="#555" /></svg>
          <svg width="5" height="8" viewBox="0 0 5 8"><path d="M.500.500v7L4.200 4z" fill="none" stroke="#555" /></svg>
          <Caret />
          <Cross s={9} c="text-[#555]" />
        </div>
      </div>
      <div className="relative h-[421px] shrink-0 border-t border-[#4a5690]">
        <Sheet />
        <CommandBar />
      </div>
      <div className="flex h-[17px] shrink-0 bg-[#bfbfbf]">
        <div className="flex w-[68px] shrink-0">
          {["M5 1L2 4l3 3zM1 1v6", "M5 1L2 4l3 3z", "M2 1l3 3-3 3z", "M2 1l3 3-3 3zM6 1v6"].map((d) => (
            <div key={d} className="flex h-[16px] w-[17px] items-center justify-center border border-[#8c8c8c] border-l-white border-t-white bg-[#f0f0f0]">
              <svg width="7" height="8" viewBox="0 0 7 8"><path d={d} fill="#999" stroke="#999" strokeWidth=".8" /></svg>
            </div>
          ))}
        </div>
        <div className="flex grow border-t border-black">
          <svg width="84" height="16" viewBox="0 0 84 16" className="shrink-0">
            <path d="M0 0l6 15h47l6-15z" fill="#fff" stroke="#000" />
            <path d="M51 15l5-15h22l-6 15z" fill="#f8cfae" stroke="#000" strokeWidth=".9" />
            <path d="M61 5h8v6h-8zM63 8h4" fill="#fff" stroke="#7c3c8c" /><path d="M59 4l3 3M62 4l-3 3" stroke="#d02c2c" strokeWidth="1.300" />
            <text x="9" y="12" fontSize="11" textLength="38" lengthAdjust="spacingAndGlyphs" fontFamily="Liberation Sans" stroke="#000" strokeWidth=".300">Sheet1</text>
          </svg>
        </div>
      </div>
      <div className="mt-[2px] flex h-[24px] shrink-0 items-stretch border-t border-[#d0d0d0] leading-none">
        <div className="flex w-[98px] shrink-0 items-center pl-[6px] text-[12px] tracking-[-0.45px] text-[#3c5c94]">
          <svg width="20" height="10" viewBox="0 0 20 10"><path d="M.500.500h19v9H.500z" fill="#b8cdec" stroke="#6c7c9c" /><path d="M0 1.500h20" stroke="#1c3474" strokeWidth="2" /><path d="M2 6h3M7 6h3M12 5v3M15 6h2" stroke="#44609c" strokeWidth="1.800" /></svg>
          <span className="ml-[6px] pt-px">PromptBar</span>
        </div>
        <div className="mt-px flex w-[841px] shrink-0 items-center whitespace-nowrap border-l border-t border-[#aaa] pl-px text-[13px] tracking-[-0.22px] text-[#222]">
          Click elements, drag right for inside fence, drag left for inside/overlapping fence, or Alt+click to place first vertex of polygon fence. Press Esc to
        </div>
        <div className="flex grow items-center justify-end gap-[7.5px] pr-[4px]">
          <span className="flex items-start font-['Liberation_Serif'] text-[15px] font-bold">A<svg width="3" height="3" viewBox="0 0 4 3"><path d="M0 3h4L2 0z" fill="#222" /></svg></span>
          <span className="-ml-px flex items-start font-['Liberation_Serif'] text-[11px]">A<svg width="3" height="3" viewBox="0 0 4 3"><path d="M0 0h4L2 3z" fill="#222" /></svg></span>
          <svg width="7" height="9" viewBox="0 0 7 9" className="shrink-0"><path d="M.500 4l3-3 3 3M.500 8l3-3 3 3" fill="none" stroke="#333" /></svg>
          <Menu /><Pin /><Cross s={8} />
        </div>
      </div>
    </main>
  );
}

function StatusBar() {
  const Cell = ({ w, children }: { w: string; children: React.ReactNode }) => <div className={"flex shrink-0 justify-center " + w}>{children}</div>;
  return (
    <div className="flex h-[20px] shrink-0 items-center border-t border-[#14246c] bg-[#2d5596]">
      <div className="w-[825px] shrink-0 pl-[634px] text-[11.5px] leading-none tracking-[-0.15px] text-white"><span className="whitespace-nowrap">0 items are selected</span></div>
      <div className="flex h-[18px] w-[140px] shrink-0 items-center bg-white pl-1 text-[11.500px] tracking-[-0.05px] text-[#b4b4b4]">Find a command</div>
      <Cell w="w-[23px]"><svg width="15" height="12" viewBox="0 0 15 12"><path d="M1 10c0-4 3-5 8-5V2l5 4.500L9 10V8C5 8 3 8 1 10z" fill="#e8f2fc" /></svg></Cell>
      <Cell w="w-[24px]"><svg width="15" height="15" viewBox="0 0 15 15"><path d="M1 1h12v12H1z" fill="#b8dcf8" stroke="#e8f2fc" strokeWidth="1.500" /><circle cx="7" cy="7" r="3" fill="#6cb0e4" stroke="#2c5c9c" /><path d="M10 10l4 4" stroke="#d8843c" strokeWidth="2" /></svg></Cell>
      <Cell w="w-[22px]"><svg width="16" height="15" viewBox="0 0 16 15"><circle cx="6" cy="6" r="4.500" fill="#7cc0f0" stroke="#d0e0ec" strokeWidth="1.500" /><path d="M9 9l5 5" stroke="#c87c4c" strokeWidth="2.500" /></svg></Cell>
      <Cell w="w-[24px]"><svg width="14" height="16" viewBox="0 0 14 16"><circle cx="7" cy="6" r="4.500" fill="#c0d8e8" stroke="#e4e4e4" /><path d="M9 0L3 8h4l-2 5 6-8H7z" fill="#f0e068" stroke="#887" strokeWidth=".5" /><path d="M9 10l4 5" stroke="#c87c4c" strokeWidth="2" /></svg></Cell>
      <Cell w="w-[21px]"><svg width="14" height="14" viewBox="0 0 14 14"><path d="M0 0h14v14H0z" fill="#eef6fe" /><path d="M3 3h2v2H3zM9 3h2v2H9zM3 9h2v2H3zM9 9h2v2H9zM6 6h2v2H6z" fill="#1c3c84" /><path d="M1 1h2M11 1h2M1 13h2M11 13h2" stroke="#4c7cc0" strokeWidth="1.500" /></svg></Cell>
      <Cell w="w-[25px]"><svg width="15" height="15" viewBox="0 0 15 15"><path d="M1 1h12v10H1z" fill="#8cb8e4" stroke="#dcebfa" /><path d="M4 8V4l2-1 2 0 3 1 1 4 1 3-4 4-3-3z" fill="#cdb898" stroke="#665" strokeWidth=".6" /></svg></Cell>
      <Cell w="w-[21px]"><svg width="14" height="14" viewBox="0 0 14 14"><circle cx="7" cy="7" r="6.500" fill="#e8eef4" /><path d="M3 7h8" stroke="#222" strokeWidth="2.200" /></svg></Cell>
      <Cell w="w-[63px]"><svg width="63" height="18" viewBox="0 0 63 18"><path d="M0 9.500h63" stroke="#dfe8f4" strokeWidth="1.200" /><path d="M23 2h11v9l-5.500 5L23 11z" fill="#b8c8dc" stroke="#eef3f8" /><path d="M26 5h5v5l-2.500 2-2.500-2z" fill="#5c80b4" /></svg></Cell>
      <Cell w="w-[18px]"><svg width="14" height="14" viewBox="0 0 14 14"><circle cx="7" cy="7" r="6.500" fill="#e8eef4" /><path d="M3 7h8M7 3v8" stroke="#222" strokeWidth="2.200" /></svg></Cell>
      <Cell w="w-[26px]"><svg width="15" height="12" viewBox="0 0 15 12"><rect width="15" height="12" rx="3" fill="#e01818" /><path d="M6 3.500l4 2.500-4 2.500z" fill="#fff" /></svg></Cell>
      <Cell w="w-[24px]"><svg width="15" height="15" viewBox="0 0 15 15"><circle cx="7.500" cy="7.500" r="6.200" fill="#cc2020" stroke="#d8b4b4" strokeWidth="1.500" /></svg></Cell>
      <Cell w="w-[24px]"><svg width="13" height="15" viewBox="0 0 13 15"><path d="M6.500 0L12 6H8.500v4h-4V6H1z" fill="#6cc83c" /><path d="M0 12.500h13" stroke="#dce4ec" strokeWidth="2.500" /></svg></Cell>
    </div>
  );
}

function Chrome({ c }: { c: "a" | "b" }) {
  return (
    <svg width="30" height="30" viewBox="-1 0 30 30">
      <circle cx="13" cy="17" r="12" fill="#34a853" />
      <path d="M2.600 11A12 12 0 0 1 23.400 11L13 11.500 8 20z" fill="#ea4335" />
      <path d="M23.400 11A12 12 0 0 1 12 29l6-9-3-9z" fill="#fbbc05" />
      <circle cx="13" cy="17" r="5.600" fill="#fff" /><circle cx="13" cy="17" r="4.500" fill="#2f7de4" />
      <circle cx="21" cy="8" r="8" fill={c === "a" ? "#28304c" : "#9c968c"} />
      <path d="M17 3l6-1 3 3-4 2z" fill={c === "a" ? "#3c5080" : "#b8b0a0"} />
      <path d="M17 8l2 4M23 7l1 5M19 13l3-3" stroke={c === "a" ? "#a8b4dc" : "#7c766c"} strokeWidth="1.400" fill="none" />
    </svg>
  );
}

const apps: [string, React.ReactNode, boolean][] = [
  ["edge", <svg width="25" height="25" viewBox="0 0 24 24"><defs><linearGradient id="e1" x1="0" x2="1"><stop offset="0" stopColor="#1c94d8" /><stop offset="1" stopColor="#5ce050" /></linearGradient></defs><path d="M0 12C0 5 6 0 12 0c7 0 12 5 12 10 0 4-3 6-6 6-2 0-4-1-3-3 1-4-2-6-5-6-4 0-8 2-10 5z" fill="url(#e1)" /><path d="M0 12c2-4 6-5 9-5-3 2-3 4-3 6 0 5 4 9 9 10.500C7 26 0 20 0 12z" fill="#1278c8" /><path d="M9 8c-2 3-1 12 12 11-2 3-5 5-9 5-6-1-9-7-7-12 1-2 2-3 4-4z" fill="#0c509c" /></svg>, false],
  ["explorer", <svg width="26" height="24" viewBox="0 0 26 24"><path d="M1 3c0-1 1-2 2-2h6l3 3v6H1z" fill="#d89c14" /><path d="M1 4h24v17c0 1-1 2-2 2H3c-1 0-2-1-2-2z" fill="#fbd04c" /><path d="M5 23v-4c0-1 1-2 2-2h12c1 0 2 1 2 2v4z" fill="#1c78c8" /><path d="M9 20h8" stroke="#0c4c8c" strokeWidth="1.500" /></svg>, true],
  ["chrome1", <Chrome c="a" />, true],
  ["chrome2", <Chrome c="b" />, true],
  ["code", <svg width="24" height="24" viewBox="0 0 24 24"><path d="M17 0l6 3v18l-6 3z" fill="#2c9ce8" /><path d="M17 0v7L4 17.500 1 15z" fill="#1c7cc8" /><path d="M17 24v-7L4 6.500 1 9z" fill="#2490dc" /></svg>, true],
  ["notepad", <svg width="21" height="25" viewBox="0 0 21 25"><path d="M1 3h19v19H1z" fill="#5cc4d8" /><path d="M1 3h19v3H1z" fill="#38a0bc" /><path d="M5 10h11M5 14h11M5 18h8" stroke="#14647c" strokeWidth="1.500" /><path d="M4 1v4M7.500 1v4M11 1v4M14.500 1v4M17.500 1v4" stroke="#1c6c84" /><path d="M1 22h19v2.500H1z" fill="#a01c24" /></svg>, true],
  ["se", <Bird s={26} />, true],
  ["obs", <svg width="28" height="28" viewBox="0 0 28 28"><circle cx="12" cy="16" r="11" fill="#1c1c20" /><g fill="none" stroke="#e4e4e4" strokeWidth="1.300"><circle cx="12" cy="16" r="8" /><path d="M12 15c-4-1-5-4-2-7M12 16c3-2 7 0 7 4M12 16c0 4-3 6-7 4" /></g><circle cx="21.500" cy="7" r="6" fill="#e80c14" /></svg>, true],
  ["vlc", <svg width="22" height="26" viewBox="0 0 22 26"><path d="M4 18h14l3 7H1z" fill="#e87c14" /><path d="M9.500 1h3l5 19c-3 2-10 2-13 0z" fill="#f08c1c" /><path d="M8.500 6h5l1.200 4.500H7.200zM6.200 14.500h9.500l1 4H5z" fill="#f0f0f0" /></svg>, true],
];

function Taskbar() {
  return (
    <footer className="flex h-[48px] shrink-0 items-center bg-[#eeeeee] text-[#222]">
      <svg width="24" height="24" viewBox="0 0 24 24" className="ml-5 shrink-0"><defs><linearGradient id="wg" x2="1" y2="1"><stop offset="0" stopColor="#54c8f0" /><stop offset="1" stopColor="#0c70c4" /></linearGradient></defs><path d="M.500.500h11v11H.500zM12.500.500h11v11h-11zM.500 12.500h11v11H.500zM12.500 12.500h11v11h-11z" fill="url(#wg)" /></svg>
      <div className="ml-[14px] flex h-[31px] w-[218px] shrink-0 items-center rounded-full border border-[#d4d4d4] bg-[#fbfbfb] pl-[10px] text-[14px] tracking-[-0.45px] text-[#555]">
        <svg width="16" height="16" viewBox="0 0 16 16"><circle cx="7" cy="6.500" r="5.200" fill="none" stroke="#222" strokeWidth="1.600" /><path d="M11 10.500l4 4" stroke="#222" strokeWidth="1.800" /></svg>
        <span className="ml-[9px]">Search</span>
      </div>
      <div className="ml-[3px] flex shrink-0">
        {apps.map(([k, el, dot]) => (
          <div key={k} className={"relative flex h-[40px] w-[38px] mx-[3px] items-center justify-center " + (k === "se" ? "rounded-[4px] border border-[#e4e4e4] bg-[#fafafa]" : "")}>
            {el}
            {dot && <div className={"absolute h-[3px] rounded-full " + (k === "se" ? "bottom-0 w-[15px] bg-[#dc4c1c]" : "bottom-px w-[6px] bg-[#8c8c8c]")} />}
            {k === "se" && <svg width="12" height="18" viewBox="0 0 12 18" className="absolute left-[12px] top-[17px]"><path d="M1 1v14l3-3 2.500 5.500 2.500-1-2.500-5.500H11z" fill="#fff" stroke="#111" /></svg>}
          </div>
        ))}
      </div>
      <div className="ml-auto flex shrink-0 items-center">
        <svg width="10" height="6" viewBox="0 0 10 6"><path d="M.500 5.500L5 1l4.500 4.500" fill="none" stroke="#222" strokeWidth="1.200" /></svg>
        <svg width="17" height="12" viewBox="0 0 17 12" className="ml-[21px]"><path d="M4 11a3.500 3.500 0 0 1 0-7 5 5 0 0 1 9 1 3 3 0 0 1 0 6z" fill="#c4c4c4" stroke="#333" /><path d="M2 4.500c4-1 7 2 12 5.500l-2 1H4C0 11 0 6 2 4.500z" fill="#8c8c8c" stroke="#333" strokeWidth=".8" /></svg>
        <svg width="17" height="20" viewBox="0 0 17 20" className="ml-[15px]"><path d="M8 1l7 2.500V9c0 5-4 8-7 9-3-1-7-4-7-9V3.500z" fill="#1c84d4" /><path d="M8 1v8h7c0 5-4 8-7 9V9H1V3.500z" fill="#48b4ec" /><path d="M11.500 9l5 10h-10z" fill="#fcc42c" /><path d="M11.500 12.500v3M11.500 16.500v1" stroke="#333" strokeWidth="1.200" /></svg>
        <svg width="12" height="20" viewBox="0 0 12 20" className="ml-[17px]"><rect x="3.500" y="1" width="5" height="11" rx="2.500" fill="#e8b8b4" stroke="#a02c2c" /><path d="M1 9c0 7 10 7 10 0M6 14v5" fill="none" stroke="#a02c2c" strokeWidth="1.200" /></svg>
        <svg width="17" height="14" viewBox="0 0 17 14" className="ml-[18px]"><rect x=".7" y=".7" width="15.500" height="12.500" rx="2" fill="none" stroke="#222" strokeWidth="1.200" /><path d="M3 4h2M7 4h2M11 4h3M3 7h2M7 7h2M11 7h3M4 10h9" stroke="#222" strokeWidth="1.300" /></svg>
        <div className="ml-[17px] w-[25px] text-center text-[11.500px] leading-[16px] tracking-[-0.2px]">ENG<br />US</div>
        <svg width="16" height="13" viewBox="0 0 16 13" className="ml-[17px]"><path d="M1 5c4-5 10-5 14 0M3.500 7.500c3-3.500 6-3.500 9 0M5.500 10c2-2 3-2 5 0" fill="none" stroke="#222" strokeWidth="1.200" /><circle cx="8" cy="11.500" r="1.300" fill="#222" /></svg>
        <svg width="17" height="14" viewBox="0 0 17 14" className="ml-[7px]"><path d="M1 5h3l4-4v12L4 9H1zM11 5l4 4M15 5l-4 4" fill="none" stroke="#222" strokeWidth="1.100" /></svg>
        <svg width="17" height="15" viewBox="0 0 17 15" className="ml-[8px]"><path d="M4 4h10v8H1V8" fill="none" stroke="#222" strokeWidth="1.300" /><path d="M6 6h6v5H6zM0 3h6v4c0 3-6 3-6 0zM1.500 0v3M4.500 0v3M14 6.500h2v3h-2z" fill="#222" stroke="#222" strokeWidth=".8" /></svg>
        <div className="ml-[7px] w-[72px] whitespace-nowrap text-right text-[11.500px] leading-[16px] tracking-[0.05px]">22:42<br />20-11-2023</div>
        <svg width="14" height="18" viewBox="0 0 14 18" className="ml-[8px] mr-[21px]"><path d="M7 1c4 0 5 3 5 6v4l2 3H0l2-3V7c0-3 1-6 5-6zM5 15h4c0 3-4 3-4 0z" fill="#942c14" /></svg>
      </div>
    </footer>
  );
}

export default function App() {
  return (
    <div className="flex h-[720px] w-[1280px] flex-col overflow-hidden bg-white font-['Open_Sans',sans-serif] [font-stretch:92%]">
      <Header />
      <Ribbon />
      <QuickBar />
      <div className="flex grow">
        <LeftPanel />
        <Main />
      </div>
      <StatusBar />
      <Taskbar />
    </div>
  );
}
